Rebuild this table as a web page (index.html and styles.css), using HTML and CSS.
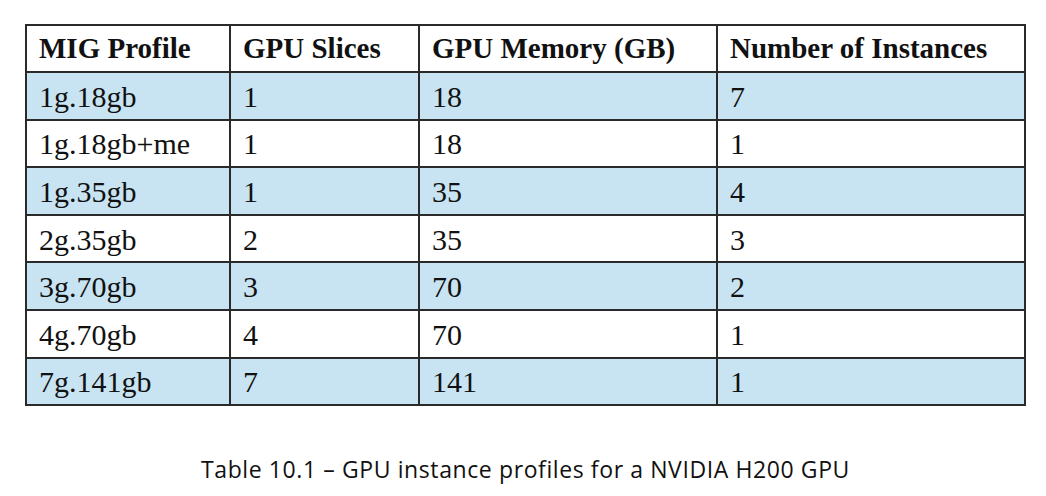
FILE: index.html
```html
<!DOCTYPE html>
<html>
<head>
<meta charset="utf-8">
<link rel="stylesheet" href="styles.css">
</head>
<body>
<div class="page">
  <table class="profiles">
    <colgroup>
      <col class="c1"><col class="c2"><col class="c3"><col class="c4">
    </colgroup>
    <thead>
      <tr><th>MIG Profile</th><th>GPU Slices</th><th>GPU Memory (GB)</th><th>Number of Instances</th></tr>
    </thead>
    <tbody>
      <tr class="alt"><td>1g.18gb</td><td>1</td><td>18</td><td>7</td></tr>
      <tr><td>1g.18gb+me</td><td>1</td><td>18</td><td>1</td></tr>
      <tr class="alt"><td>1g.35gb</td><td>1</td><td>35</td><td>4</td></tr>
      <tr><td>2g.35gb</td><td>2</td><td>35</td><td>3</td></tr>
      <tr class="alt"><td>3g.70gb</td><td>3</td><td>70</td><td>2</td></tr>
      <tr><td>4g.70gb</td><td>4</td><td>70</td><td>1</td></tr>
      <tr class="alt"><td>7g.141gb</td><td>7</td><td>141</td><td>1</td></tr>
    </tbody>
  </table>
  <p class="caption">Table 10.1 – GPU instance profiles for a NVIDIA H200 GPU</p>
</div>
</body>
</html>
```

FILE: styles.css
```css
html, body {
  margin: 0;
  padding: 0;
  background: #ffffff;
}
.page {
  padding: 24px 0 0 25px;
  width: 1001px;
}
.profiles {
  border-collapse: collapse;
  width: 1001px;
  table-layout: fixed;
  font-family: "Liberation Serif", "Times New Roman", serif;
  color: #111;
}
.c1 { width: 204px; }
.c2 { width: 189px; }
.c3 { width: 298px; }
.c4 { width: 308px; }
.profiles th,
.profiles td {
  border: 2px solid #2a2a2a;
  padding: 0 12px;
  text-align: left;
  vertical-align: middle;
  font-size: 30px;
  line-height: 30px;
  white-space: nowrap;
}
.profiles td {
  height: 43.6px;
  padding-top: 2px;
}
.profiles th {
  height: 44px;
  font-weight: bold;
  font-size: 29px;
  padding-bottom: 1px;
}
.profiles tr.alt td {
  background: #c8e4f2;
}
.caption {
  margin: 48px 0 0 0;
  text-align: center;
  font-family: "Open Sans", "Liberation Sans", Arial, sans-serif;
  font-size: 23px;
  line-height: 30px;
  letter-spacing: 0.6px;
  color: #111;
}
```
